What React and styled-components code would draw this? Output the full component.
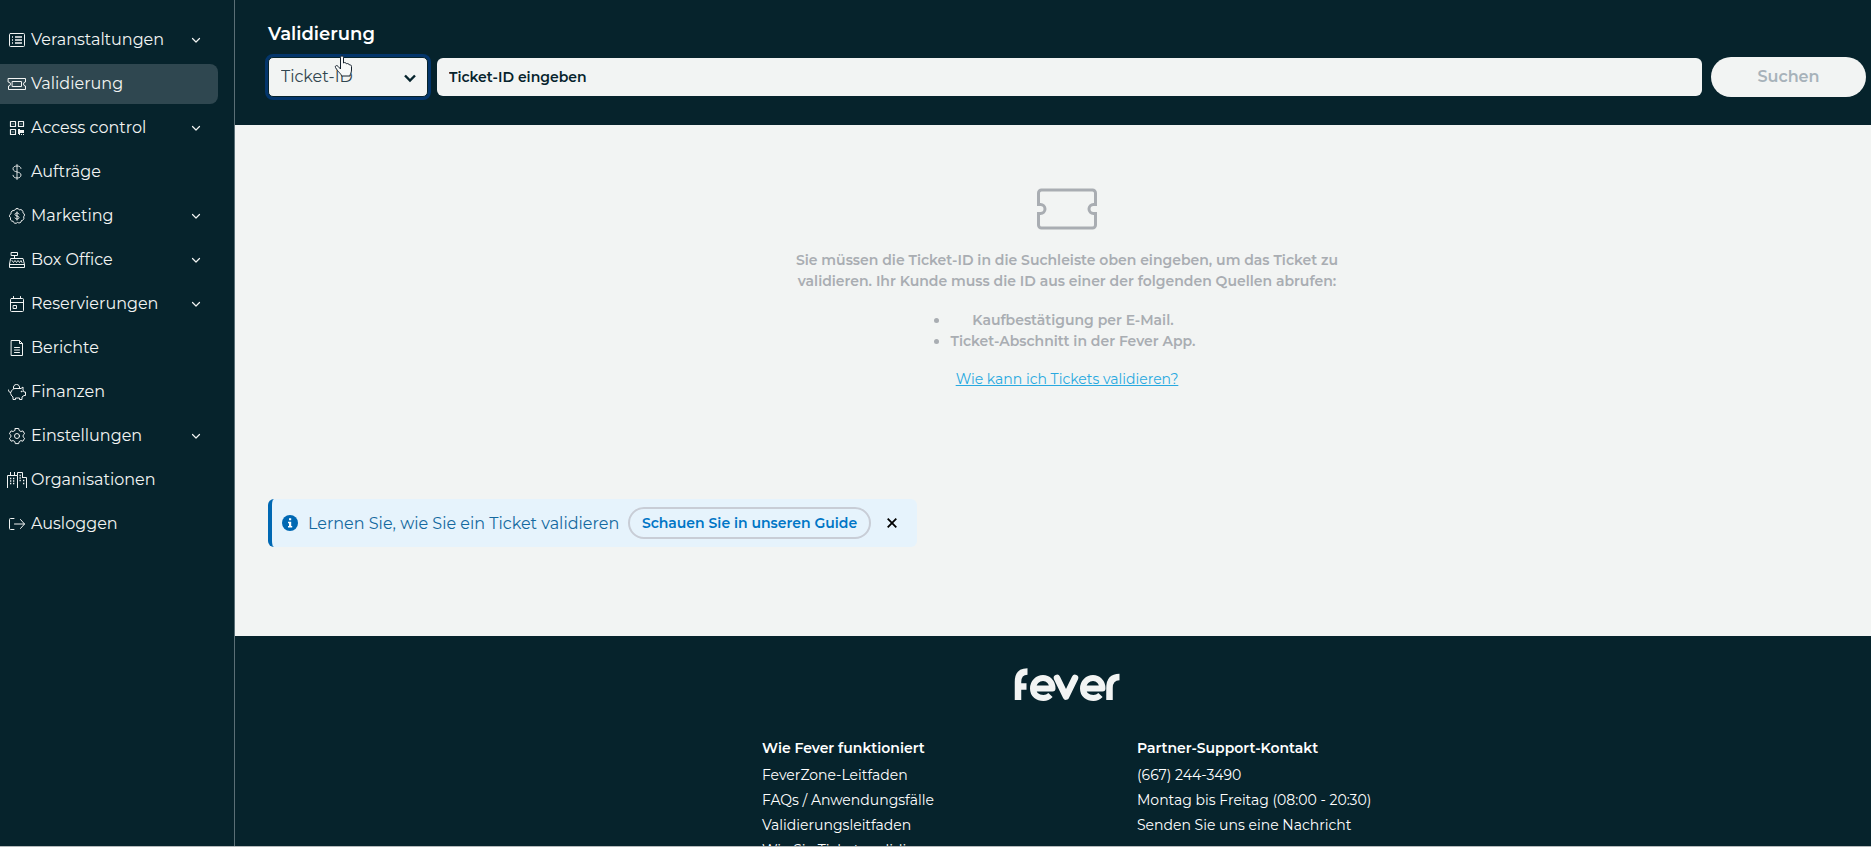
import React from 'react';
import styled, { createGlobalStyle } from 'styled-components';

const Global = createGlobalStyle`
  *, *::before, *::after { box-sizing: border-box; }
  body { margin: 0; font-family: Montserrat, Inter, sans-serif; font-size: 16px; color: #06232c; background: #06232c; }
  button, input, select { font-family: inherit; }
  h1, h2, p, ul { margin: 0; }
`;

const Shell = styled.div`
  display: flex;
  height: 100vh;
  overflow: hidden;
  border-bottom: 1px solid #b4b9bb;
`;

const Sidebar = styled.nav`
  flex: 0 0 235px;
  padding: 20px 16px 0 0;
  border-right: 1px solid #5a6f76;
  display: flex;
  flex-direction: column;
  gap: 4px;
`;

const NavItem = styled.a`
  display: flex;
  align-items: center;
  gap: 4px;
  height: 40px;
  padding: 0 16px 0 7px;
  border-radius: 0 8px 8px 0;
  background: ${p => (p.$active ? '#2f4750' : 'transparent')};
  color: #f2f4f3;
  text-decoration: none;
  svg { flex: none; }
`;

const NavLabel = styled.span`
  flex: 1;
  font-size: 16px;
  line-height: 20px;
  white-space: nowrap;
`;

const Page = styled.div`
  flex: 1;
  min-width: 0;
  display: flex;
  flex-direction: column;
`;

const Header = styled.header`
  height: 125px;
  flex: none;
  padding: 22px 5px 0 33px;
`;

const Title = styled.h1`
  font-size: 18px;
  line-height: 24px;
  font-weight: 600;
  color: #fff;
`;

const SearchForm = styled.form`
  display: flex;
  align-items: center;
  gap: 9px;
  margin-top: 11px;
`;

const SelectWrap = styled.div`
  position: relative;
  flex: 0 0 160px;
  > svg { position: absolute; pointer-events: none; }
`;

const Select = styled.select`
  appearance: none;
  display: block;
  width: 100%;
  height: 40px;
  padding: 0 32px 1px 12px;
  border: 1px solid #06232c;
  border-radius: 5px;
  outline: 3px solid #03356b;
  outline-offset: 0;
  background: #f2f4f3;
  color: #31464f;
  font-size: 16px;
  font-weight: 400;
`;

const SearchInput = styled.input`
  flex: 1;
  min-width: 0;
  height: 38px;
  padding: 0 12px;
  border: 0;
  border-radius: 6px;
  background: #f2f4f3;
  font-size: 14px;
  font-weight: 600;
  &::placeholder { color: #06232c; opacity: 1; }
`;

const SearchButton = styled.button`
  flex: 0 0 155px;
  height: 40px;
  border: 0;
  padding: 0 0 1px;
  border-radius: 20px;
  background: #f2f4f3;
  color: #a7b2ba;
  font-size: 16px;
  font-weight: 600;
`;

const Main = styled.main`
  flex: none;
  height: 511px;
  padding: 63px 5px 0 33px;
  background: #f2f4f3;
`;

const EmptyState = styled.section`
  display: flex;
  flex-direction: column;
  align-items: center;
  text-align: center;
  color: #a9adb2;
  font-size: 14px;
  line-height: 21px;
  font-weight: 600;
`;

const Lead = styled.p`
  max-width: 570px;
  margin-top: 20px;
`;

const Sources = styled.ul`
  margin: 18px 0 17px;
  padding-left: 12px;
`;

const HelpLink = styled.a`
  font-weight: 400;
  color: #28a9e0;
`;

const Notice = styled.aside`
  display: flex;
  align-items: center;
  width: 649px;
  height: 48px;
  margin-top: 109px;
  padding-left: 10px;
  border-left: 4px solid #0068b3;
  border-radius: 6px;
  background: #e6f3fc;
`;

const NoticeText = styled.p`
  margin-left: 10px;
  width: 311px;
  white-space: nowrap;
  font-size: 16px;
  font-weight: 400;
  color: #14699f;
`;

const GuideButton = styled.button`
  width: 243px;
  height: 32px;
  margin-left: 9px;
  padding: 0;
  border: 2px solid #c8cdd6;
  border-radius: 16px;
  background: transparent;
  color: #0076c6;
  font-size: 14px;
  font-weight: 600;
  white-space: nowrap;
`;

const CloseButton = styled.button`
  display: flex;
  margin-left: 12px;
  padding: 4px;
  border: 0;
  background: transparent;
  color: #000;
`;

const Footer = styled.footer`
  flex: 1;
  min-height: 0;
  overflow: hidden;
  padding: 32px 5px 0 33px;
  display: flex;
  flex-direction: column;
  align-items: center;
  color: #fff;
  > svg { flex: none; }
`;

const FooterColumns = styled.div`
  display: grid;
  grid-template-columns: 375px 235px;
  margin-top: 34px;
`;

const FooterList = styled.ul`
  padding: 0;
  list-style: none;
  font-size: 14px;
  line-height: 25px;
  white-space: nowrap;
  a { color: inherit; text-decoration: none; }
`;

const FooterTitle = styled.h2`
  font-size: 14px;
  line-height: 24px;
  margin-bottom: 3px;
  font-weight: 600;
`;

const Stroke = ({ children, w = 1, size = 20 }) => (
  <svg width={size} height={size} viewBox={`0 0 ${size} ${size}`} fill="none" stroke="currentColor" strokeWidth={w} strokeLinecap="round" strokeLinejoin="round" aria-hidden="true">
    {children}
  </svg>
);

const Chevron = () => (
  <Stroke size={12} w={1.2}><path d="M2.500 4.500 6 8 9.500 4.500" /></Stroke>
);

const icons = {
  list: <><rect x="2.500" y="3.500" width="15" height="13" rx="1" /><path d="M5 7h1M5 10h1M5 13h1M8 7h7M8 10h7M8 13h7" strokeWidth="1.400" strokeLinecap="butt" /></>,
  ticket: <><path d="M1.500 4.500h17v3.500a2 2 0 0 0 0 4v3.500h-17V12a2 2 0 0 0 0-4z" /><rect x="5.500" y="7.500" width="9" height="5" /></>,
  qr: <><path d="M3.500 3.500h5v5h-5zM11.500 3.500h5v5h-5zM3.500 11.500h5v5h-5z" strokeWidth="1.200" /><path d="M5.500 5.500h1v1h-1zM13.500 5.500h1v1h-1zM5.500 13.500h1v1h-1zM11 11h2v1h4v3h-4v1h-2zM12 16h1v1h-1zM14 16h1v1h-1zM16 16h1v1h-1z" fill="currentColor" stroke="none" /></>,
  dollar: <path d="M10 2.500v15M14 6.500c0-1.500-1.700-2.500-4-2.500S6 5 6 6.800c0 4 8 2.300 8 6.200 0 2-1.700 3-4 3s-4-1.200-4-2.700" strokeWidth=".9" />,
  promo: <><path d="M10 2.500q1.500 0 2.300 1.300 1.700-.7 2.900.5 1 1.100.7 2.400 1.600.8 1.600 2.300-.1 1-.9 1.800.8 1.500-.2 2.800-.7.900-1.900.9-.1 1.700-1.600 2.300-1.200.4-2.300-.4-1.300 1.300-2.900.8-1.200-.5-1.500-1.900-1.700.1-2.500-1.200-.6-1.200 0-2.300Q2.300 11.200 2.500 9.600q.3-1.300 1.600-1.900-.4-1.700.9-2.700 1-.8 2.300-.4Q8.200 2.600 10 2.500z" /><path d="M10 6v8M12 8c-.4-.7-1.200-1-2-1-1.200 0-2 .5-2 1.500 0 2 4 1 4 3 0 1-.8 1.500-2 1.500-.9 0-1.700-.4-2-1" /></>,
  register: <><path d="M4.500 2.500h6v3h-6zM7.500 5.500v3M4 8.500h12l1.500 6v3h-15v-3zM2.500 14.500h15" /><path d="M5 10.500l1.500 2L8 10.500l1.500 2 1.500-2 1.500 2 1.500-2 1 2" strokeWidth=".9" /></>,
  calendar: <><rect x="3.500" y="4.500" width="13" height="13" rx="1" /><path d="M3.500 8.500h13M6.500 2.500v2M13.500 2.500v2" /><path d="M6.500 11.500h3v3h-3z" /></>,
  file: <><path d="M4.500 2.500h8l3 3v12h-11zM12.500 2.500v3h3M7.500 9.500h5M7.500 12h5M7.500 14.500h5" /></>,
  pig: <><path d="M1.500 8c0 1.700 1 2.500 2.300 2.500C4.500 8 6.500 6.500 8 6.500h6l2-1.500V8l1 2h1.500v3.500H17L15 15v2.500h-2.500V16h-4v1.500H6V15c-1.500-1-2.500-2.700-2.500-4.500" /><path d="M6.500 6.500c-.5-2.500.8-4 3-4s3.500 1.500 3 4" /><circle cx="14.500" cy="9.500" r=".4" /></>,
  gear: <><path d="M8.300 2.500h3.400l.5 2 1.700 1 2-.6 1.700 2.900-1.500 1.400v1.700l1.500 1.400-1.700 2.900-2-.6-1.700 1-.5 2H8.300l-.5-2-1.700-1-2 .6-1.700-2.900 1.500-1.400V9.200L2.400 7.800l1.700-2.900 2 .6 1.700-1z" /><circle cx="10" cy="10" r="2.500" /></>,
  org: <><path d="M.5 17.500V5.500h10v12M3.500 5V2.500M7.500 5V2.500M10.500 5V2.500h5v5M15.500 7.500h4v10" strokeLinecap="square" /><path d="M3 8.500h1.300M6 8.500h1.300M3 11h1.300M6 11h1.300M3 13.500h1.300M6 13.500h1.300M12.500 5.500h1.300M12.500 8h1.300M12.500 10.500h1.300M16 10.500h1.300M16 13.500h1.300" strokeWidth="1.500" strokeLinecap="butt" /></>,
  logout: <path d="M7 4.500H3.500a1 1 0 0 0-1 1v9a1 1 0 0 0 1 1H7M7.500 10h10M13.500 5.500 17.500 10l-4 4.500" />,
};

const navItems = [
  ['Veranstaltungen', 'list', true],
  ['Validierung', 'ticket', false],
  ['Access control', 'qr', true],
  ['Aufträge', 'dollar', false],
  ['Marketing', 'promo', true],
  ['Box Office', 'register', true],
  ['Reservierungen', 'calendar', true],
  ['Berichte', 'file', false],
  ['Finanzen', 'pig', false],
  ['Einstellungen', 'gear', true],
  ['Organisationen', 'org', false],
  ['Ausloggen', 'logout', false],
];

const SelectArrow = styled.svg`
  right: 10px;
  top: 13px;
`;

const HandCursor = styled.svg`
  left: 65px;
  top: -2px;
`;

const FeverLogo = () => (
  <svg width="106" height="34" viewBox="0 0 106 34" fill="none" stroke="#f2f4f3" strokeWidth="6" strokeLinecap="butt" strokeLinejoin="round" role="img" aria-label="fever">
    <path d="M4 32V14C4 7 7 3.500 13.500 3.500M4 18.500h8.500" strokeWidth="6.500" />
    <path d="M18 20.500h20.500C38.500 14 34 10 29 10S19 14 19 20.500 24 30 29.500 30c3 0 5-1 7-3" strokeWidth="6" />
    <path d="M43 10 52 28.500 61 10" strokeLinecap="round" strokeWidth="6.500" />
    <path d="M68 20.500h20.500C88.500 14 84 10 79 10S69 14 69 20.500 74 30 79.500 30c3 0 5-1 7-3" strokeWidth="6" />
    <path d="M95.500 32V20c0-7 3-11 10-11" strokeWidth="6.500" />
  </svg>
);

export default function App() {
  return (
    <>
      <Global />
      <Shell>
        <Sidebar>
          {navItems.map(([label, icon, expandable]) => (
            <NavItem href="#" key={label} $active={label === 'Validierung'}>
              <Stroke>{icons[icon]}</Stroke>
              <NavLabel>{label}</NavLabel>
              {expandable && <Chevron />}
            </NavItem>
          ))}
        </Sidebar>
        <Page>
          <Header>
            <Title>Validierung</Title>
            <SearchForm>
              <SelectWrap>
                <Select aria-label="Suchtyp"><option>Ticket-ID</option></Select>
                <SelectArrow width="16" height="16" viewBox="0 0 16 16" fill="none" stroke="#06232c" strokeWidth="2.400"><path d="M3 5.500 8 10.500 13 5.500" /></SelectArrow>
                <HandCursor width="20" height="24" viewBox="0 0 20 24" fill="#f7f9f9" stroke="#14202c" strokeWidth="1"><path d="M7.500 14V2.500c0-2 3-2 3 0V8c1-.8 2.500-.4 3 .8 1-.6 2.400-.2 2.700 1 1-.3 2.300.4 2.300 1.700V15c0 3-1.500 4-1.500 6H8.500c0-2-3.500-4-6-8.500-.8-1.600 1.200-2.700 2.500-1.200z" /></HandCursor>
              </SelectWrap>
              <SearchInput aria-label="Ticket-ID" placeholder="Ticket-ID eingeben" />
              <SearchButton type="button" disabled>Suchen</SearchButton>
            </SearchForm>
          </Header>
          <Main>
            <EmptyState>
              <svg width="60" height="42" viewBox="0 0 60 42" fill="none" stroke="currentColor" strokeWidth="3" aria-hidden="true"><path d="M4.500 2h51a3 3 0 0 1 3 3v11.500h-2a4.500 4.500 0 0 0 0 9h2V37a3 3 0 0 1-3 3h-51a3 3 0 0 1-3-3V25.500h2a4.500 4.500 0 0 0 0-9h-2V5a3 3 0 0 1 3-3z" /></svg>
              <Lead>Sie müssen die Ticket-ID in die Suchleiste oben eingeben, um das Ticket zu validieren. Ihr Kunde muss die ID aus einer der folgenden Quellen abrufen:</Lead>
              <Sources>
                <li>Kaufbestätigung per E-Mail.</li>
                <li>Ticket-Abschnitt in der Fever App.</li>
              </Sources>
              <HelpLink href="#">Wie kann ich Tickets validieren?</HelpLink>
            </EmptyState>
            <Notice>
              <svg width="16" height="16" viewBox="0 0 16 16" aria-hidden="true"><circle cx="8" cy="8" r="8" fill="#0068b3" /><path d="M7 3.200h2.200v2H7zM6 6.700h3.200v4.300h1V12.500H6V11h1V8.200H6z" fill="#fff" /></svg>
              <NoticeText>Lernen Sie, wie Sie ein Ticket validieren</NoticeText>
              <GuideButton type="button">Schauen Sie in unseren Guide</GuideButton>
              <CloseButton type="button" aria-label="Schließen">
                <svg width="10" height="10" viewBox="0 0 10 10" stroke="currentColor" strokeWidth="1.800"><path d="M.7.7 9.300 9.300M9.300.7.7 9.300" /></svg>
              </CloseButton>
            </Notice>
          </Main>
          <Footer>
            <FeverLogo />
            <FooterColumns>
              <section>
                <FooterTitle>Wie Fever funktioniert</FooterTitle>
                <FooterList>
                  <li><a href="#">FeverZone-Leitfaden</a></li>
                  <li><a href="#">FAQs / Anwendungsfälle</a></li>
                  <li><a href="#">Validierungsleitfaden</a></li>
                  <li><a href="#">Wie Sie Tickets validieren</a></li>
                </FooterList>
              </section>
              <section>
                <FooterTitle>Partner-Support-Kontakt</FooterTitle>
                <FooterList>
                  <li>(667) 244-3490</li>
                  <li>Montag bis Freitag (08:00 - 20:30)</li>
                  <li><a href="#">Senden Sie uns eine Nachricht</a></li>
                </FooterList>
              </section>
            </FooterColumns>
          </Footer>
        </Page>
      </Shell>
    </>
  );
}
